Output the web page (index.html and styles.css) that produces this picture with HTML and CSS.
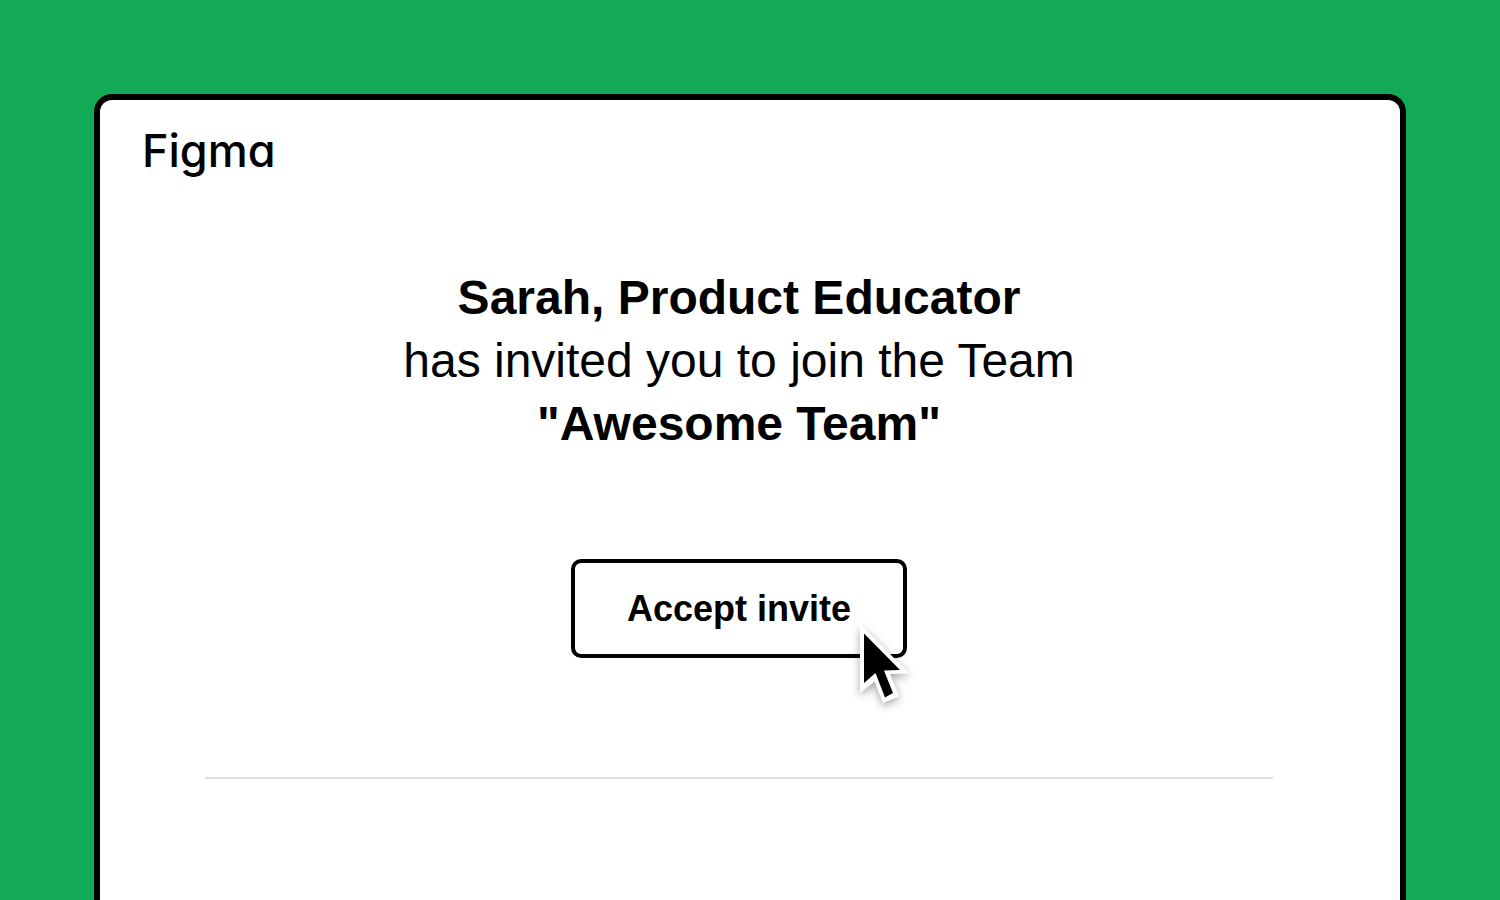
FILE: index.html
```html
<!DOCTYPE html>
<html lang="en">
<head>
  <meta charset="utf-8">
  <meta name="viewport" content="width=device-width, initial-scale=1">
  <title>Figma team invite</title>
  <link rel="stylesheet" href="styles.css">
</head>
<body>
  <main class="card">
    <header class="brand">Figma</header>
    <section class="invite">
      <h1 class="message">
        <strong>Sarah, Product Educator</strong>
        <span>has invited you to join the Team</span>
        <strong>"Awesome Team"</strong>
      </h1>
      <div class="action">
        <button class="accept" type="button">Accept invite</button>
        <svg class="cursor" viewBox="0 0 70 100" aria-hidden="true">
          <path fill="#fff" d="M10 14 59.5 63.5 40 64 49 86.500 33 93 24.700 71.500 10 83Z"/>
          <path fill="#000" d="M14 23.500 50 60 34 60.500 43 83 35 87.500 25.500 63 14 73Z"/>
        </svg>
      </div>
      <hr class="divider">
    </section>
  </main>
</body>
</html>
```

FILE: styles.css
```css
* {
  box-sizing: border-box;
}

body {
  display: flex;
  min-height: 100vh;
  margin: 0;
  padding: 94px 94px 0;
  background: #12a957;
  color: #000;
  font-family: "Liberation Sans", Arial, sans-serif;
}

.card {
  flex: 1;
  padding: 22px 42px;
  border: 6px solid #000;
  border-bottom: 0;
  border-radius: 18px 18px 0 0;
  background: #fff;
}

/* cv11 selects the single-storey a */
.brand {
  font-family: Inter, Lato, sans-serif;
  font-feature-settings: "cv11";
  font-size: 45px;
  font-weight: 500;
  line-height: 58px;
}

.invite {
  display: flex;
  flex-direction: column;
  align-items: center;
  padding: 86px 85px 0 63px;
}

.message {
  display: flex;
  flex-direction: column;
  margin: 0;
  font-size: 48px;
  font-weight: 400;
  line-height: 63px;
  text-align: center;
}

.action {
  position: relative;
  margin-top: 104px;
}

.accept {
  display: block;
  padding: 24px 52px;
  border: 4px solid #000;
  border-radius: 10px;
  background: #fff;
  color: #000;
  font: bold 36px/43px "Liberation Sans", Arial, sans-serif;
  cursor: pointer;
}

.cursor {
  position: absolute;
  right: -13px;
  bottom: -52px;
  width: 70px;
  height: 100px;
  filter: drop-shadow(0 3px 4px rgb(0 0 0 / 35%));
  pointer-events: none;
}

.divider {
  width: 100%;
  height: 2px;
  margin: 119px 0 0;
  border: 0;
  background: #dedede;
}
```
